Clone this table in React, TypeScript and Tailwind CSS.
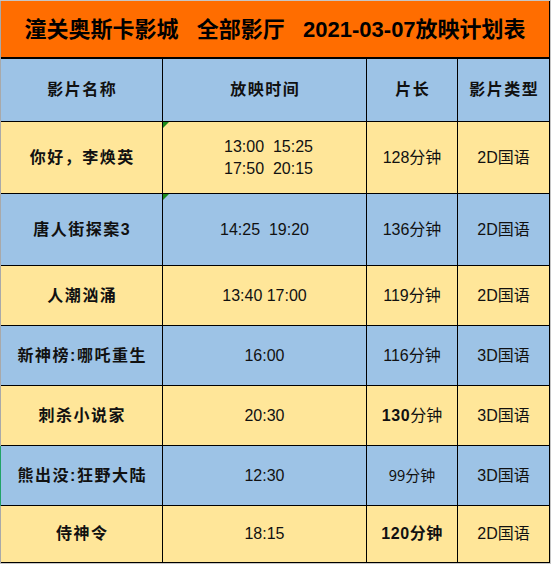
const BLUE = 'bg-[#9dc3e6]'
const YELLOW = 'bg-[#ffe699]'

interface Film {
  name: string
  times: string[]
  length: React.ReactNode
  type: string
  height: string
  color: string
  marker?: boolean
  selected?: boolean
}

const films: Film[] = [
  {
    name: '你好，李焕英',
    times: ['13:00  15:25', '17:50  20:15'],
    length: '128分钟',
    type: '2D国语',
    height: 'h-[72px]',
    color: YELLOW,
    marker: true,
  },
  {
    name: '唐人街探案3',
    times: ['14:25  19:20'],
    length: '136分钟',
    type: '2D国语',
    height: 'h-[72px]',
    color: BLUE,
    marker: true,
  },
  { name: '人潮汹涌', times: ['13:40 17:00'], length: '119分钟', type: '2D国语', height: 'h-[60px]', color: YELLOW },
  { name: '新神榜:哪吒重生', times: ['16:00'], length: '116分钟', type: '3D国语', height: 'h-[60px]', color: BLUE },
  {
    name: '刺杀小说家',
    times: ['20:30'],
    length: (
      <>
        <span className="font-bold tracking-[0.6px]">130</span>分钟
      </>
    ),
    type: '3D国语',
    height: 'h-[60px]',
    color: YELLOW,
  },
  {
    name: '熊出没:狂野大陆',
    times: ['12:30'],
    length: <span className="text-[15px] font-['Noto_Sans_CJK_SC',sans-serif]">99分钟</span>,
    type: '3D国语',
    height: 'h-[60px]',
    color: BLUE,
    selected: true,
  },
  {
    name: '侍神令',
    times: ['18:15'],
    length: <span className="font-bold tracking-[0.6px]">120分钟</span>,
    type: '2D国语',
    height: 'h-[57px]',
    color: YELLOW,
  },
]

const cell = 'flex items-center justify-center border-r border-b border-black text-center'

export default function App() {
  return (
    <div className="w-[551px] h-[564px] border-t border-r border-b border-[#c6c6c6] bg-white font-['Liberation_Sans','Noto_Sans_CJK_SC',sans-serif] text-[#111]">
      {/* Title */}
      <div className="flex border-l border-[#a9a9a9]">
        <div className="w-[549px] h-[58px] flex items-center justify-center bg-[#ff6d00] border-r border-b-2 border-black">
          <h1 className="text-[22px] font-bold text-black whitespace-pre leading-none pt-[1px]">
            潼关奥斯卡影城   全部影厅   2021-03-07放映计划表
          </h1>
        </div>
      </div>

      {/* Header */}
      <div className={`flex h-[63px] border-l border-[#a9a9a9] ${BLUE}`}>
        <div className={`${cell} w-[162px]`}>
          <span className="text-[16px] font-bold tracking-[1.5px] pl-[1.5px]">影片名称</span>
        </div>
        <div className={`${cell} w-[204px]`}>
          <span className="text-[16px] font-bold tracking-[1.5px] pl-[1.5px]">放映时间</span>
        </div>
        <div className={`${cell} w-[91px]`}>
          <span className="text-[16px] font-bold tracking-[1.5px] pl-[1.5px]">片长</span>
        </div>
        <div className={`${cell} w-[92px]`}>
          <span className="text-[16px] font-bold tracking-[1.5px] pl-[1.5px]">影片类型</span>
        </div>
      </div>

      {/* Rows */}
      {films.map((film) => (
        <div
          key={film.name}
          className={`flex ${film.height} ${film.color} border-l ${film.selected ? 'border-[#21a366]' : 'border-[#a9a9a9]'}`}
        >
          <div className={`${cell} w-[162px]`}>
            <span className="text-[16px] font-bold tracking-[1.5px] pl-[1.5px] whitespace-nowrap">{film.name}</span>
          </div>
          <div className={`${cell} w-[204px] relative flex-col ${film.times.length > 1 ? 'pl-[8px]' : ''}`}>
            {film.marker && (
              <svg className="absolute left-0 top-0" width="6" height="6" viewBox="0 0 6 6">
                <polygon points="0,0 6,0 0,6" fill="#1b8a1b" />
              </svg>
            )}
            {film.times.map((t) => (
              <div key={t} className="text-[16px] leading-[22px] whitespace-pre">
                {t}
              </div>
            ))}
          </div>
          <div className={`${cell} w-[91px] text-[16px] whitespace-nowrap`}>{film.length}</div>
          <div className={`${cell} w-[92px] text-[16px] whitespace-nowrap`}>{film.type}</div>
        </div>
      ))}
    </div>
  )
}
